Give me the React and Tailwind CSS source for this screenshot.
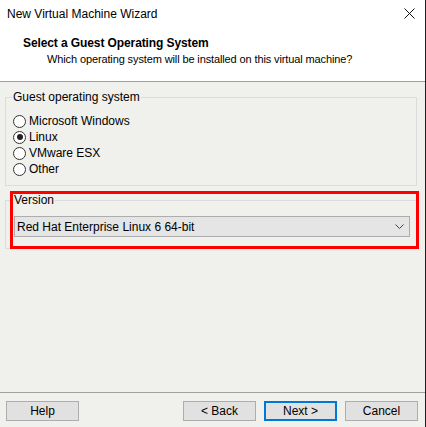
export default function App() {
  const radios = [
    { label: "Microsoft Windows", checked: false },
    { label: "Linux", checked: true },
    { label: "VMware ESX", checked: false },
    { label: "Other", checked: false },
  ];

  return (
    <div className="w-[426px] h-[427px] flex flex-col bg-[#f0f0ec] text-[12px] leading-[16px] text-black border-r border-[#1f1f1f] relative" style={{ fontFamily: '"Liberation Sans", Arial, sans-serif' }}>
      {/* title bar + header */}
      <div className="bg-white">
        <div className="h-[27px] flex items-center justify-between pl-[7px] pr-[9px]">
          <span>New Virtual Machine Wizard</span>
          <svg width="11" height="11" viewBox="0 0 11 11" className="mr-[1px]">
            <path d="M0.5 0.5 L10.5 10.5 M10.5 0.5 L0.5 10.5" stroke="#111" strokeWidth="1" fill="none" />
          </svg>
        </div>
        <div className="h-[54px] pt-[8px]">
          <div className="pl-[23px] font-bold tracking-[-0.1px]">Select a Guest Operating System</div>
          <div className="pl-[47px] text-[11px] tracking-[-0.12px]">Which operating system will be installed on this virtual machine?</div>
        </div>
      </div>
      <div className="h-px bg-[#a0a0a0]" />

      {/* body */}
      <div className="flex-1 pl-[5px] pr-[8px]">
        <fieldset className="mt-[7px] border border-[#dcdcdc] pl-[7px] pb-[8px]">
          <legend className="-ml-[1px] px-[1px]">Guest operating system</legend>
          <div className="mt-[8px] flex flex-col">
            {radios.map((r) => (
              <div key={r.label} className="h-[16px] flex items-center gap-[3px]">
                <span className="w-[13px] h-[13px] rounded-full border border-[#333] bg-white flex items-center justify-center">
                  {r.checked && <span className="w-[6px] h-[6px] rounded-full bg-[#222]" />}
                </span>
                <span>{r.label}</span>
              </div>
            ))}
          </div>
        </fieldset>

        <fieldset className="mt-[6px] border border-[#dcdcdc] pl-[8px] pr-[6px] pb-[11px]">
          <legend className="-ml-[1px] px-[1px]">Version</legend>
          <div className="mt-[8px] h-[21px] border border-[#adadad] bg-[#e5e5e5] flex items-center justify-between pl-[2px] pr-[5px]">
            <span>Red Hat Enterprise Linux 6 64-bit</span>
            <svg width="9" height="5" viewBox="0 0 9 5">
              <path d="M0.5 0.5 L4.5 4.5 L8.5 0.5" stroke="#444" strokeWidth="1" fill="none" />
            </svg>
          </div>
        </fieldset>
      </div>

      {/* footer */}
      <div className="h-px bg-[#a0a0a0]" />
      <div className="h-[34px] flex items-start pt-[8px] pl-[6px] pr-[7px]">
        <button className="w-[73px] h-[20px] border border-[#adadad] bg-[#e1e1e1]">Help</button>
        <div className="flex-1" />
        <div className="flex gap-[8px]">
          <button className="w-[73px] h-[20px] border border-[#adadad] bg-[#e1e1e1]">&lt; Back</button>
          <button className="w-[73px] h-[20px] border-2 border-[#0078d7] bg-[#e1e1e1]">Next &gt;</button>
          <button className="w-[73px] h-[20px] border border-[#adadad] bg-[#e1e1e1]">Cancel</button>
        </div>
      </div>

      {/* annotation highlight */}
      <div className="absolute left-[10px] top-[191px] w-[409px] h-[58px] border-[3px] border-[#ff0000] pointer-events-none" />
    </div>
  );
}
